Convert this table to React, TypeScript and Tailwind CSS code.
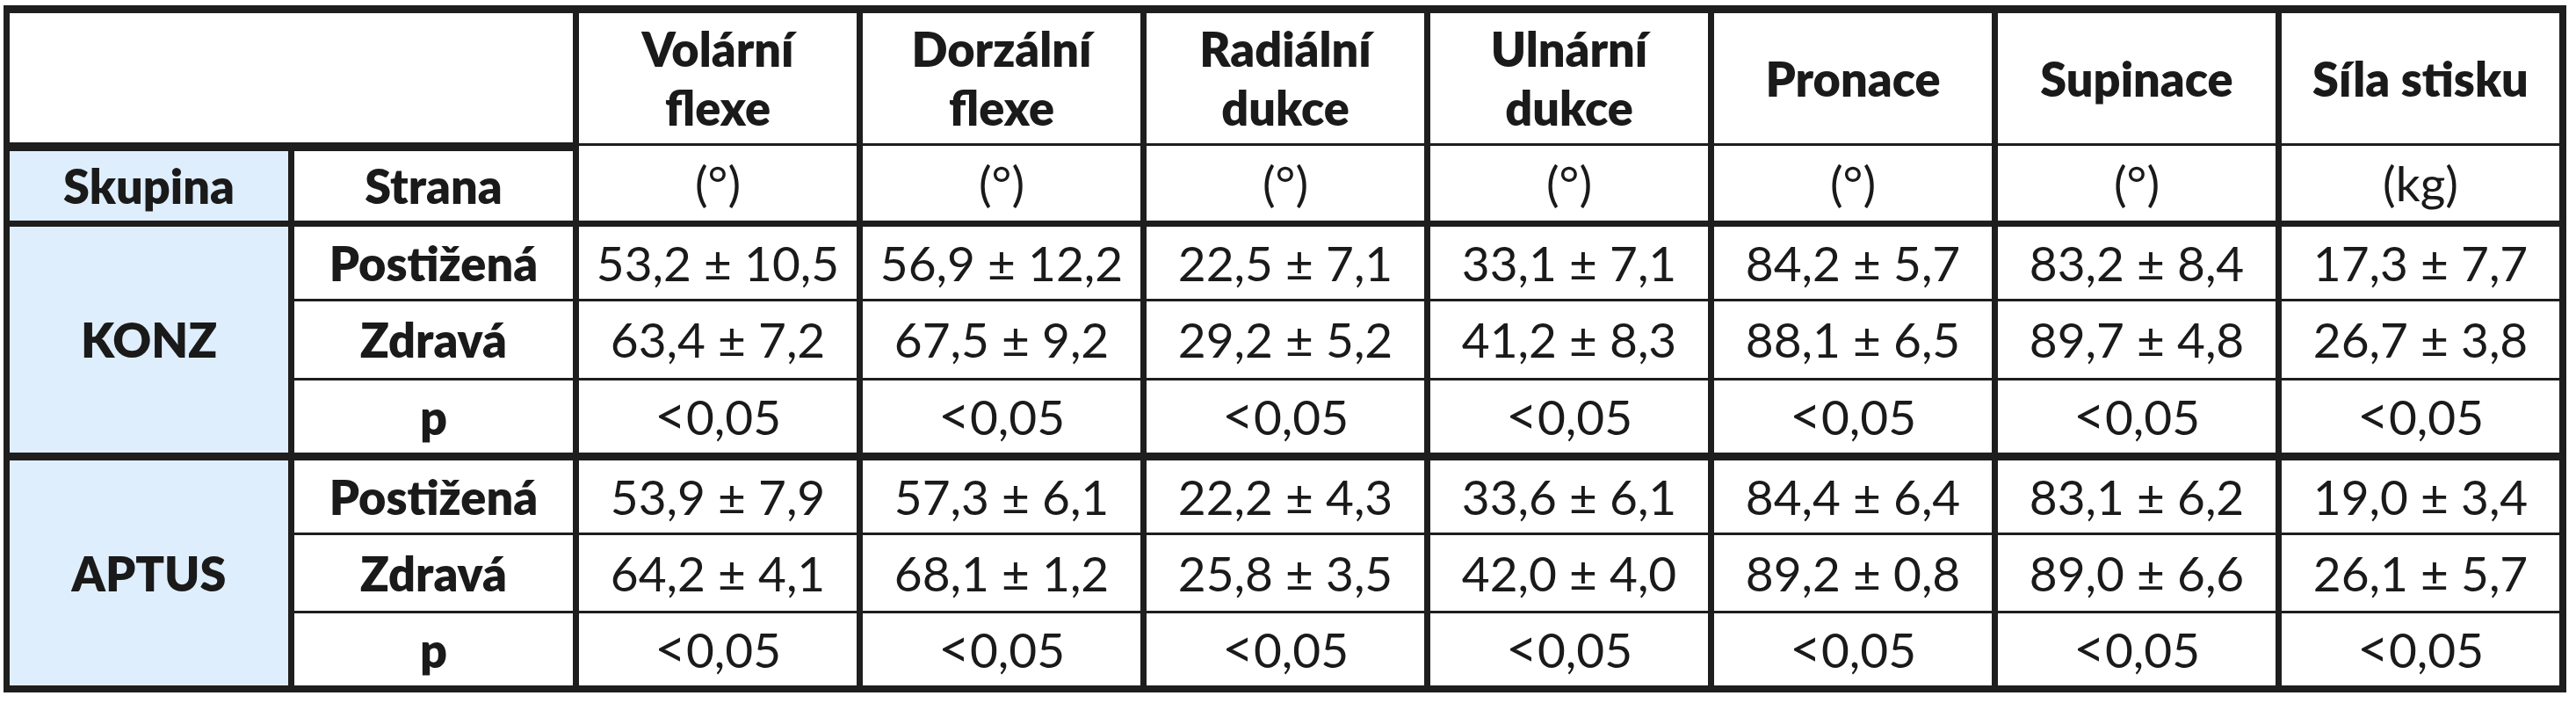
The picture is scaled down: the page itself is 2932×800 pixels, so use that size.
const columns = [
  ['Volární', 'flexe'],
  ['Dorzální', 'flexe'],
  ['Radiální', 'dukce'],
  ['Ulnární', 'dukce'],
  ['Pronace'],
  ['Supinace'],
  ['Síla stisku'],
];

const units = ['(°)', '(°)', '(°)', '(°)', '(°)', '(°)', '(kg)'];

const p = Array(7).fill('<0,05');

const groups = [
  {
    name: 'KONZ',
    rows: [
      { side: 'Postižená', values: ['53,2 ± 10,5', '56,9 ± 12,2', '22,5 ± 7,1', '33,1 ± 7,1', '84,2 ± 5,7', '83,2 ± 8,4', '17,3 ± 7,7'] },
      { side: 'Zdravá', values: ['63,4 ± 7,2', '67,5 ± 9,2', '29,2 ± 5,2', '41,2 ± 8,3', '88,1 ± 6,5', '89,7 ± 4,8', '26,7 ± 3,8'] },
      { side: 'p', values: p },
    ],
  },
  {
    name: 'APTUS',
    rows: [
      { side: 'Postižená', values: ['53,9 ± 7,9', '57,3 ± 6,1', '22,2 ± 4,3', '33,6 ± 6,1', '84,4 ± 6,4', '83,1 ± 6,2', '19,0 ± 3,4'] },
      { side: 'Zdravá', values: ['64,2 ± 4,1', '68,1 ± 1,2', '25,8 ± 3,5', '42,0 ± 4,0', '89,2 ± 0,8', '89,0 ± 6,6', '26,1 ± 5,7'] },
      { side: 'p', values: p },
    ],
  },
];

// bottom line under each data row: thin inside a group, thick between groups
function rowBorder(groupIndex: number, rowIndex: number) {
  if (rowIndex < 2) return 'border-b-[3px]';
  if (groupIndex === 0) return 'border-b-[9px]';
  return '';
}

export default function App() {
  return (
    <div className="min-h-screen bg-white font-[Lato,sans-serif] text-[#1a1a1a]">
      <div className="ml-[4px] mt-[6px] inline-grid grid-cols-[317px_317px_repeat(7,316px)] grid-rows-[151px_92px_85px_90px_91px_85px_89px_82px] gap-x-[7px] border-[#1e1e1e] border-l-[7px] border-r-[8px] border-t-[9px] border-b-[8px] bg-[#1e1e1e]">
        {/* header */}
        <div className="col-span-2 bg-white border-b-[4px] border-[#1e1e1e]" />
        {columns.map((lines, i) => (
          <div
            key={i}
            className="flex flex-col items-center justify-center bg-white border-b-[3px] border-[#1e1e1e] text-[54px] font-extrabold leading-[67px]"
          >
            {lines.map(l => (
              <span key={l}>{l}</span>
            ))}
          </div>
        ))}

        {/* units row */}
        <div className="flex items-center justify-center bg-[#dfeefc] border-t-[6px] border-b-[7px] border-[#1e1e1e] text-[54px] font-extrabold">
          Skupina
        </div>
        <div className="flex items-center justify-center bg-white border-t-[6px] border-b-[7px] border-[#1e1e1e] text-[54px] font-extrabold">
          Strana
        </div>
        {units.map((u, i) => (
          <div
            key={i}
            className="flex items-center justify-center bg-white border-b-[7px] border-[#1e1e1e] text-[55px]"
          >
            {u}
          </div>
        ))}

        {/* data */}
        {groups.map((g, gi) =>
          g.rows.map((r, ri) => (
            <Row key={g.name + ri} group={ri === 0 ? g.name : null} last={gi === groups.length - 1} side={r.side} values={r.values} border={rowBorder(gi, ri)} />
          ))
        )}
      </div>
    </div>
  );
}

function Row({ group, last, side, values, border }: { group: string | null; last: boolean; side: string; values: string[]; border: string }) {
  return (
    <>
      {group && (
        <div className={`row-span-3 flex items-center justify-center bg-[#dfeefc] border-[#1e1e1e] text-[54px] font-extrabold ${last ? '' : 'border-b-[9px]'}`}>
          {group}
        </div>
      )}
      <div className={`flex items-center justify-center bg-white border-[#1e1e1e] text-[54px] font-extrabold ${border}`}>
        {side}
      </div>
      {values.map((v, i) => (
        <div key={i} className={`flex items-center justify-center bg-white border-[#1e1e1e] text-[55px] ${border}`}>
          {v.startsWith('<') ? (
            <span>
              <span className="text-[62px] leading-none">&lt;</span>
              {v.slice(1)}
            </span>
          ) : (
            v
          )}
        </div>
      ))}
    </>
  );
}
